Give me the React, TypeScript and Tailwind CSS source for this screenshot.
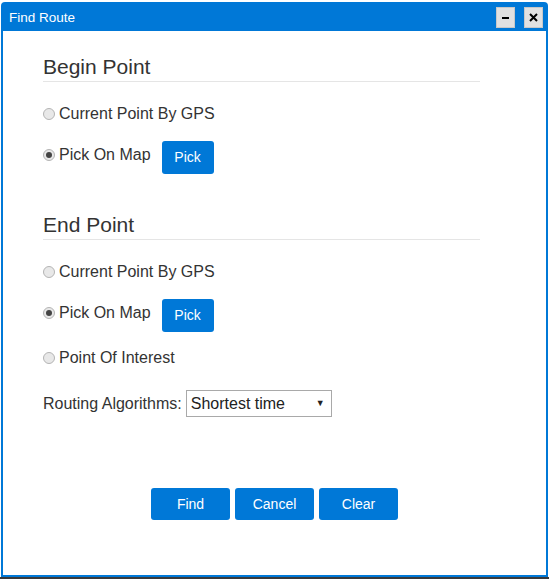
import React from "react";

const font = { fontFamily: '"Liberation Sans", Arial, sans-serif' };

function Radio({ checked, label }: { checked?: boolean; label: string }) {
  return (
    <div className="flex items-center h-[18px]">
      <span className="w-[12px] h-[12px] rounded-full border border-[#b4b4b4] bg-[#e8e8e8] flex items-center justify-center shrink-0">
        {checked && <span className="w-[6px] h-[6px] rounded-full bg-[#444]" />}
      </span>
      <span className="ml-[4px] text-[16px] leading-[18px] text-[#333]">{label}</span>
    </div>
  );
}

function PickRow() {
  return (
    <div className="flex items-start">
      <div className="mt-[5px]">
        <Radio checked label="Pick On Map" />
      </div>
      <button className="ml-[11px] w-[52px] h-[33px] rounded-[3px] bg-[#0078d7] text-white text-[14px]">Pick</button>
    </div>
  );
}

function Heading({ text }: { text: string }) {
  return (
    <div className="w-[437px] border-b border-[#e5e5e5] pt-[2px] pb-[2px]">
      <h2 className="text-[21px] leading-[24px] text-[#333]">{text}</h2>
    </div>
  );
}

export default function App() {
  return (
    <div className="w-[549px] h-[579px] bg-white relative overflow-hidden" style={font}>
      <div className="ml-[1px] mt-[2px] w-[547px] h-[575px] bg-[#0078d7] rounded-t-[4px] px-[2px] pb-[2px] flex flex-col">
        <div className="h-[29px] flex items-center justify-between pl-[6px] pr-[3px]">
          <span className="text-white text-[13.5px] mt-[3px]">Find Route</span>
          <div className="flex gap-[9px] mt-[2px]">
            <div className="w-[19px] h-[21px] bg-[#e1e1e1] border border-[#c8c8c8] flex items-center justify-center">
              <span className="w-[7px] h-[2px] bg-black" />
            </div>
            <div className="w-[19px] h-[21px] bg-[#e1e1e1] border border-[#c8c8c8] flex items-center justify-center">
              <svg width="9" height="9" viewBox="0 0 9 9"><path d="M1 1 L8 8 M8 1 L1 8" stroke="#000" strokeWidth="2" /></svg>
            </div>
          </div>
        </div>
        <div className="flex-1 bg-white pl-[40px] pt-[22px] flex flex-col">
          <Heading text="Begin Point" />
          <div className="mt-[23px]"><Radio label="Current Point By GPS" /></div>
          <div className="mt-[18px]"><PickRow /></div>
          <div className="mt-[37px]"><Heading text="End Point" /></div>
          <div className="mt-[23px]"><Radio label="Current Point By GPS" /></div>
          <div className="mt-[18px]"><PickRow /></div>
          <div className="mt-[17px]"><Radio label="Point Of Interest" /></div>
          <div className="mt-[23px] flex items-center">
            <span className="text-[16px] leading-[18px] text-[#333]">Routing Algorithms:</span>
            <div className="ml-[4px] w-[146px] h-[27px] border border-[#a9a9a9] bg-white flex items-center justify-between pl-[4px] pr-[6px]">
              <span className="text-[16px] leading-[18px] text-[#222]">Shortest time</span>
              <span className="text-[9px] text-[#222]">▼</span>
            </div>
          </div>
          <div className="mt-[71px] flex justify-center gap-[5px] -ml-[40px]">
            {["Find", "Cancel", "Clear"].map((t) => (
              <button key={t} className="w-[79px] h-[32px] rounded-[3px] bg-[#0078d7] text-white text-[14px]">{t}</button>
            ))}
          </div>
        </div>
      </div>
      <div className="h-[2px] bg-[#3a3a3a]" />
    </div>
  );
}
